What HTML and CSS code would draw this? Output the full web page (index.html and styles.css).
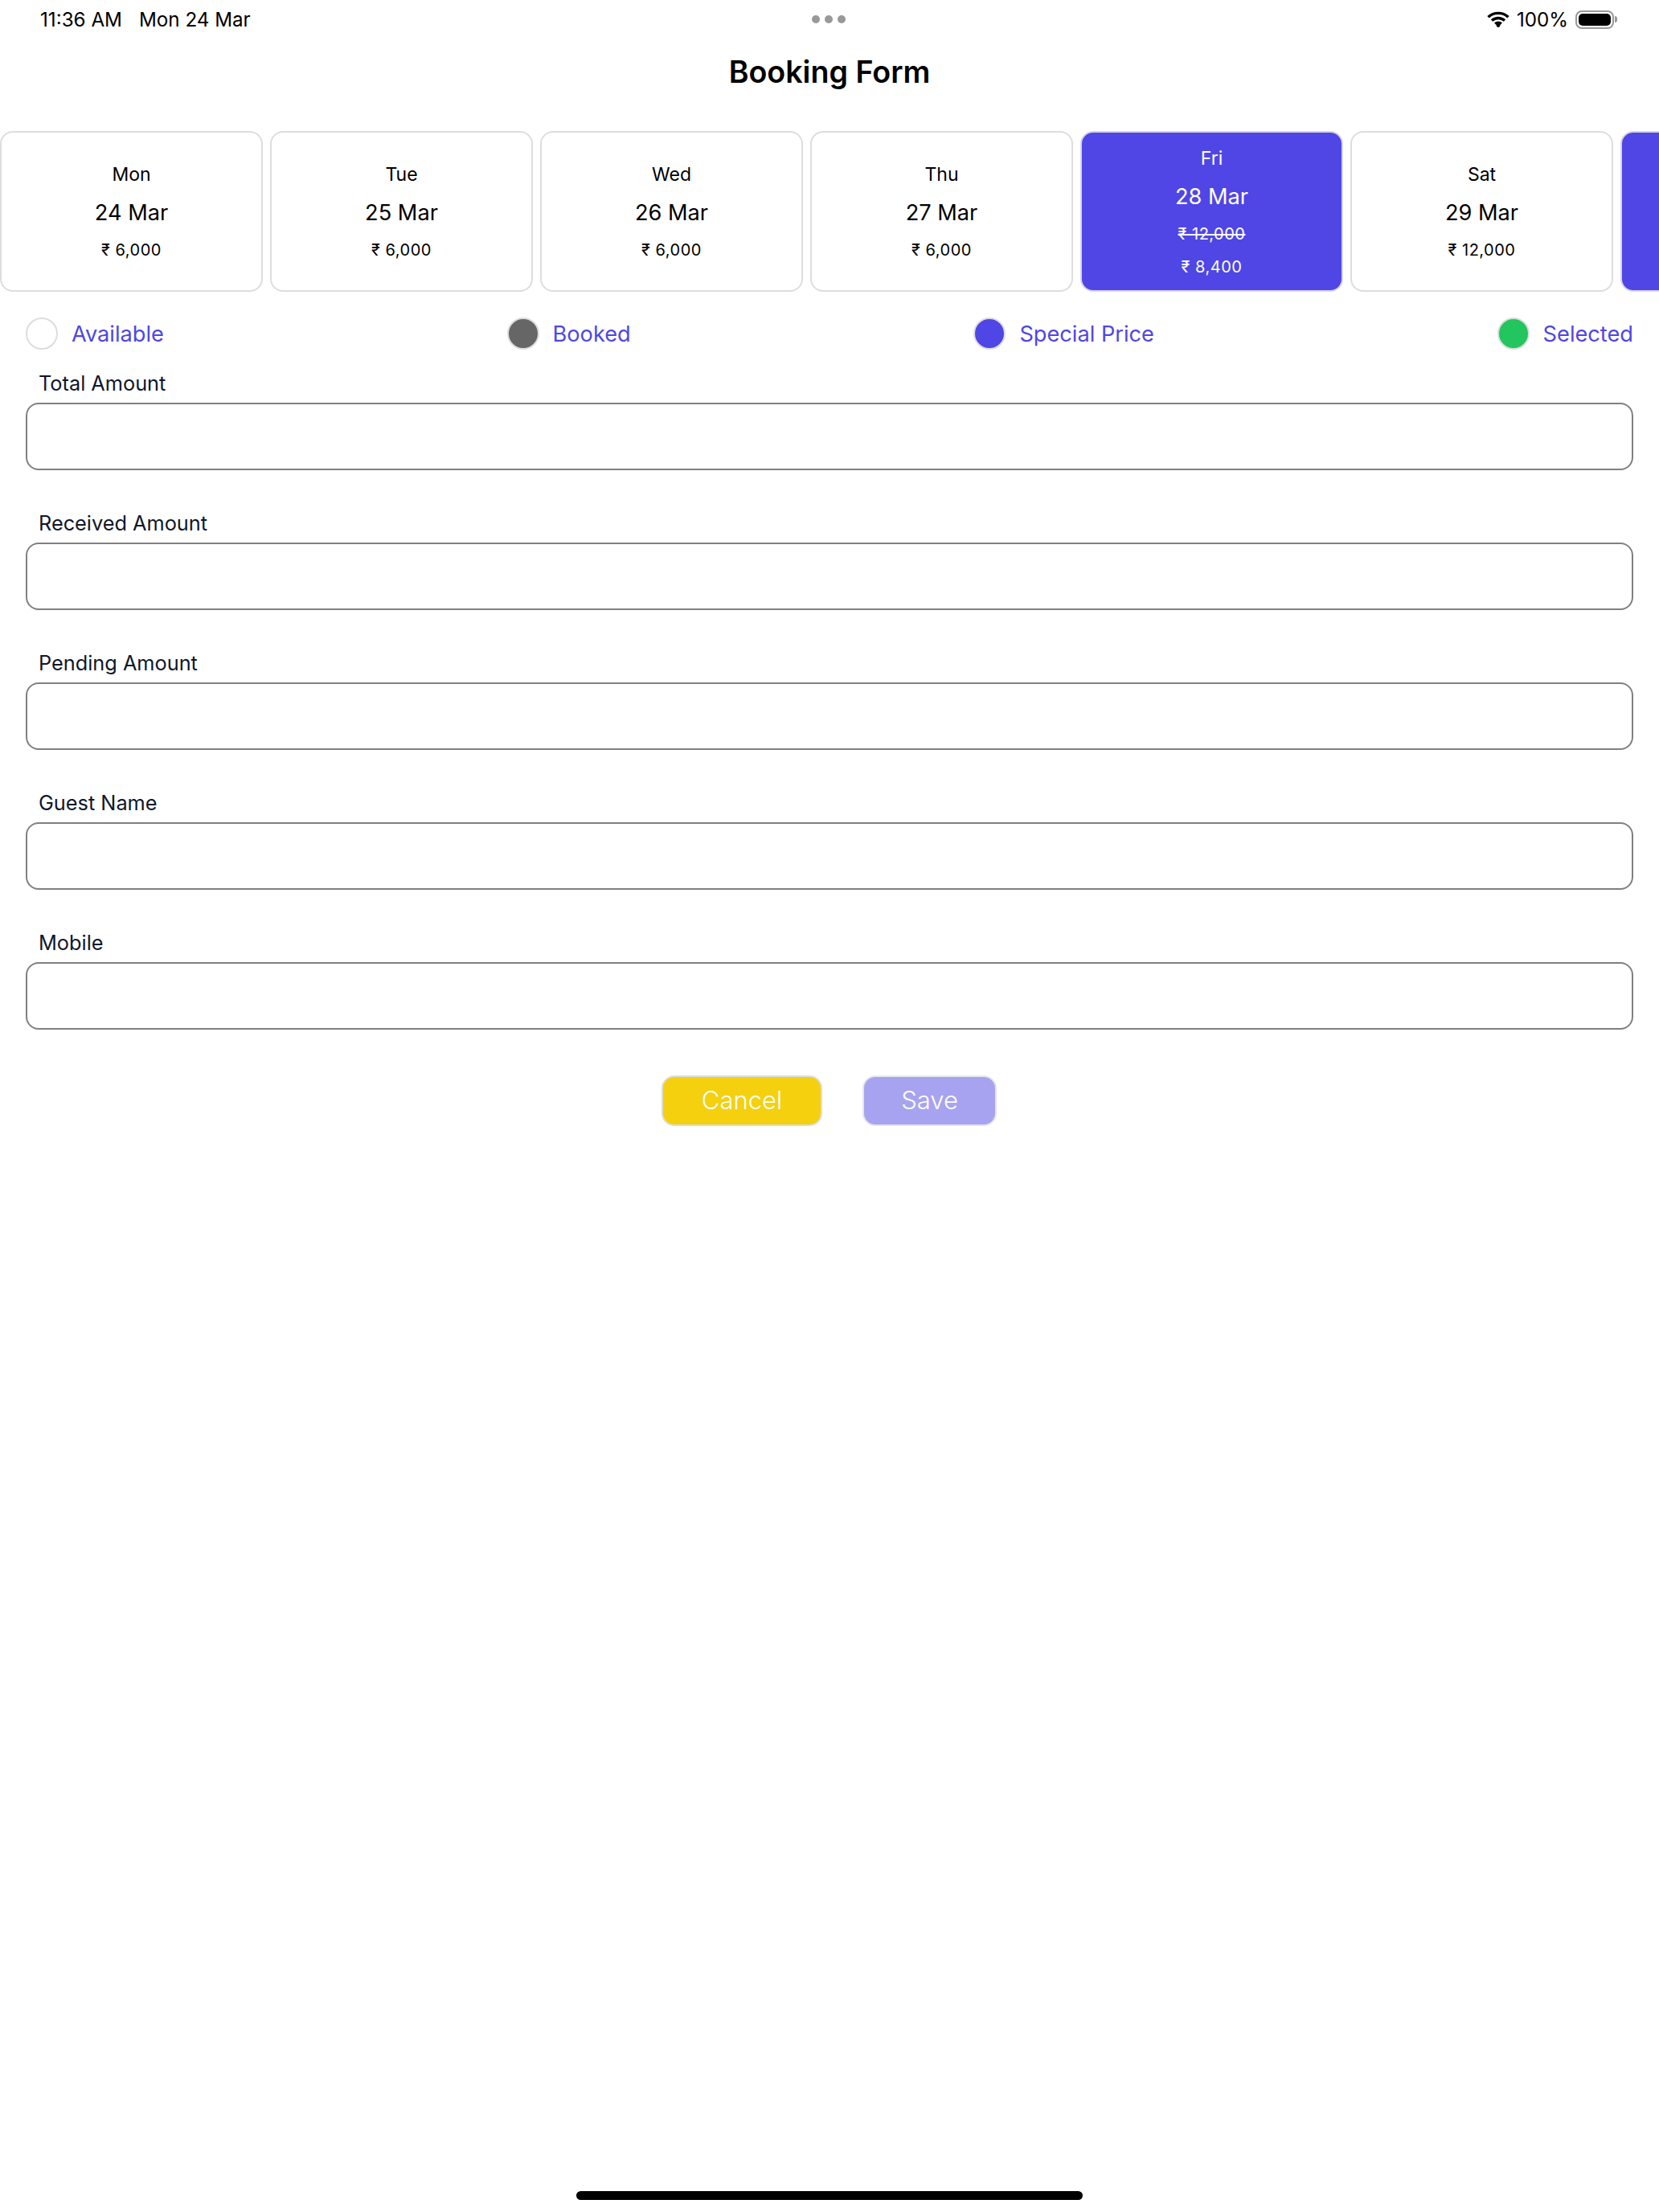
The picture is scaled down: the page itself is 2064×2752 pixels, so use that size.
FILE: index.html
```html
<!DOCTYPE html>
<html lang="en">
<head>
<meta charset="utf-8">
<title>Booking Form</title>
<link rel="stylesheet" href="styles.css">
</head>
<body>
<div class="page">
  <header class="status">
    <div class="status-left"><span>11:36 AM</span><span>Mon 24 Mar</span></div>
    <div class="status-dots"><i></i><i></i><i></i></div>
    <div class="status-right">
      <svg class="wifi" width="28" height="20" viewBox="0 0 28 20"><path d="M1.5 7.2C8.5 .8 19.5 .8 26.5 7.2" /><path d="M6 11.6C10.6 7.4 17.4 7.4 22 11.6" /><path d="M10.2 15.6C12.4 13.8 15.6 13.8 17.8 15.6" /><circle cx="14" cy="17.6" r="2.4"/></svg>
      <span>100%</span>
      <div class="battery"><div class="battery-fill"></div></div>
      <div class="battery-tip"></div>
    </div>
  </header>
  <h1 class="title">Booking Form</h1>
  <section class="days">
    <div class="day"><div class="d-name">Mon</div><div class="d-date">24 Mar</div><div class="d-price">₹ 6,000</div></div>
    <div class="day"><div class="d-name">Tue</div><div class="d-date">25 Mar</div><div class="d-price">₹ 6,000</div></div>
    <div class="day"><div class="d-name">Wed</div><div class="d-date">26 Mar</div><div class="d-price">₹ 6,000</div></div>
    <div class="day"><div class="d-name">Thu</div><div class="d-date">27 Mar</div><div class="d-price">₹ 6,000</div></div>
    <div class="day special"><div class="d-name">Fri</div><div class="d-date">28 Mar</div><div class="d-price struck">₹ 12,000</div><div class="d-price">₹ 8,400</div></div>
    <div class="day"><div class="d-name">Sat</div><div class="d-date">29 Mar</div><div class="d-price">₹ 12,000</div></div>
    <div class="day special"></div>
  </section>
  <section class="legend">
    <div class="legend-item"><span class="dot available"></span>Available</div>
    <div class="legend-item"><span class="dot booked"></span>Booked</div>
    <div class="legend-item"><span class="dot price"></span>Special Price</div>
    <div class="legend-item"><span class="dot selected"></span>Selected</div>
  </section>
  <form class="form">
    <div class="field"><label>Total Amount</label><div class="input"></div></div>
    <div class="field"><label>Received Amount</label><div class="input"></div></div>
    <div class="field"><label>Pending Amount</label><div class="input"></div></div>
    <div class="field"><label>Guest Name</label><div class="input"></div></div>
    <div class="field"><label>Mobile</label><div class="input"></div></div>
  </form>
  <div class="actions">
    <div class="btn cancel">Cancel</div>
    <div class="btn save">Save</div>
  </div>
  <div class="home"></div>
</div>
</body>
</html>
```
FILE: styles.css
```css
* { box-sizing: border-box; }
html, body { margin: 0; padding: 0; background: #fff; }
body { font-family: Inter, "Liberation Sans", sans-serif; color: #000; }
.page { width: 2064px; height: 2752px; display: flex; flex-direction: column; overflow: hidden; }

.status { height: 48px; display: grid; grid-template-columns: 1fr auto 1fr; align-items: center; padding: 0 52px 0 50px; font-size: 24.2px; }
.status-left { display: flex; gap: 21px; }
.status-dots { display: flex; gap: 6px; }
.status-dots i { width: 10px; height: 10px; border-radius: 50%; background: #999; }
.status-right { display: flex; justify-content: flex-end; align-items: center; }
.wifi { margin-right: 9px; }
.wifi path { fill: none; stroke: #000; stroke-width: 3.4; }
.battery { width: 48px; height: 23px; margin-left: 9px; border: 2px solid #999; border-radius: 8px; padding: 2px; }
.battery-fill { height: 100%; background: #000; border-radius: 5px; }
.battery-tip { width: 3px; height: 8px; margin-left: 1px; background: #999; border-radius: 0 3px 3px 0; }

.title { margin: 17px 0 0; font-size: 37.6px; line-height: 50px; font-weight: 600; text-align: center; }

.days { display: flex; gap: 9px; margin-top: 48px; }
.day { flex: 0 0 327px; height: 200px; display: flex; flex-direction: column; align-items: center; justify-content: center; gap: 16px; border: 2px solid #ddd; border-radius: 16px; background: #fff; }
.d-name { font-size: 23px; line-height: 28px; }
.d-date { font-size: 27.2px; line-height: 34px; margin-top: 1px; }
.d-price { font-size: 20px; line-height: 24px; letter-spacing: .5px; margin-top: 1px; }
.struck { text-decoration: line-through; }
.special { background: #4f46e5; color: #fff; border-color: #d5d5e5; }

.legend { display: flex; justify-content: space-between; align-items: center; padding: 0 32px; margin-top: 32px; height: 40px; font-size: 27.2px; color: #4f46e5; }
.legend-item { display: flex; align-items: center; gap: 17px; }
.dot { width: 40px; height: 40px; border-radius: 50%; border: 2px solid #ddd; }
.dot.booked { background: #666; }
.dot.price { background: #4f46e5; }
.dot.selected { background: #22c55e; }

.form { display: flex; flex-direction: column; gap: 50px; padding: 0 32px; margin-top: 26px; }
.field label { display: block; padding-left: 16px; font-size: 25.3px; line-height: 32px; color: #0f172a; margin-bottom: 8px; }
.input { height: 84px; border: 2px solid #808080; border-radius: 16px; }

.actions { display: flex; justify-content: center; gap: 50px; margin-top: 57px; padding-right: 1px; }
.btn { height: 63px; display: flex; align-items: center; justify-content: center; padding-bottom: 2px; border: 2px solid #ddd; border-radius: 16px; color: #fff; font-size: 31px; font-weight: 300; }
.cancel { width: 200px; background: #f5d00f; }
.save { width: 167px; background: #a8a3f0; border-color: #e5e5ee; }

.home { width: 630px; height: 11px; margin: auto auto 15px; background: #000; border-radius: 6px; }
```
